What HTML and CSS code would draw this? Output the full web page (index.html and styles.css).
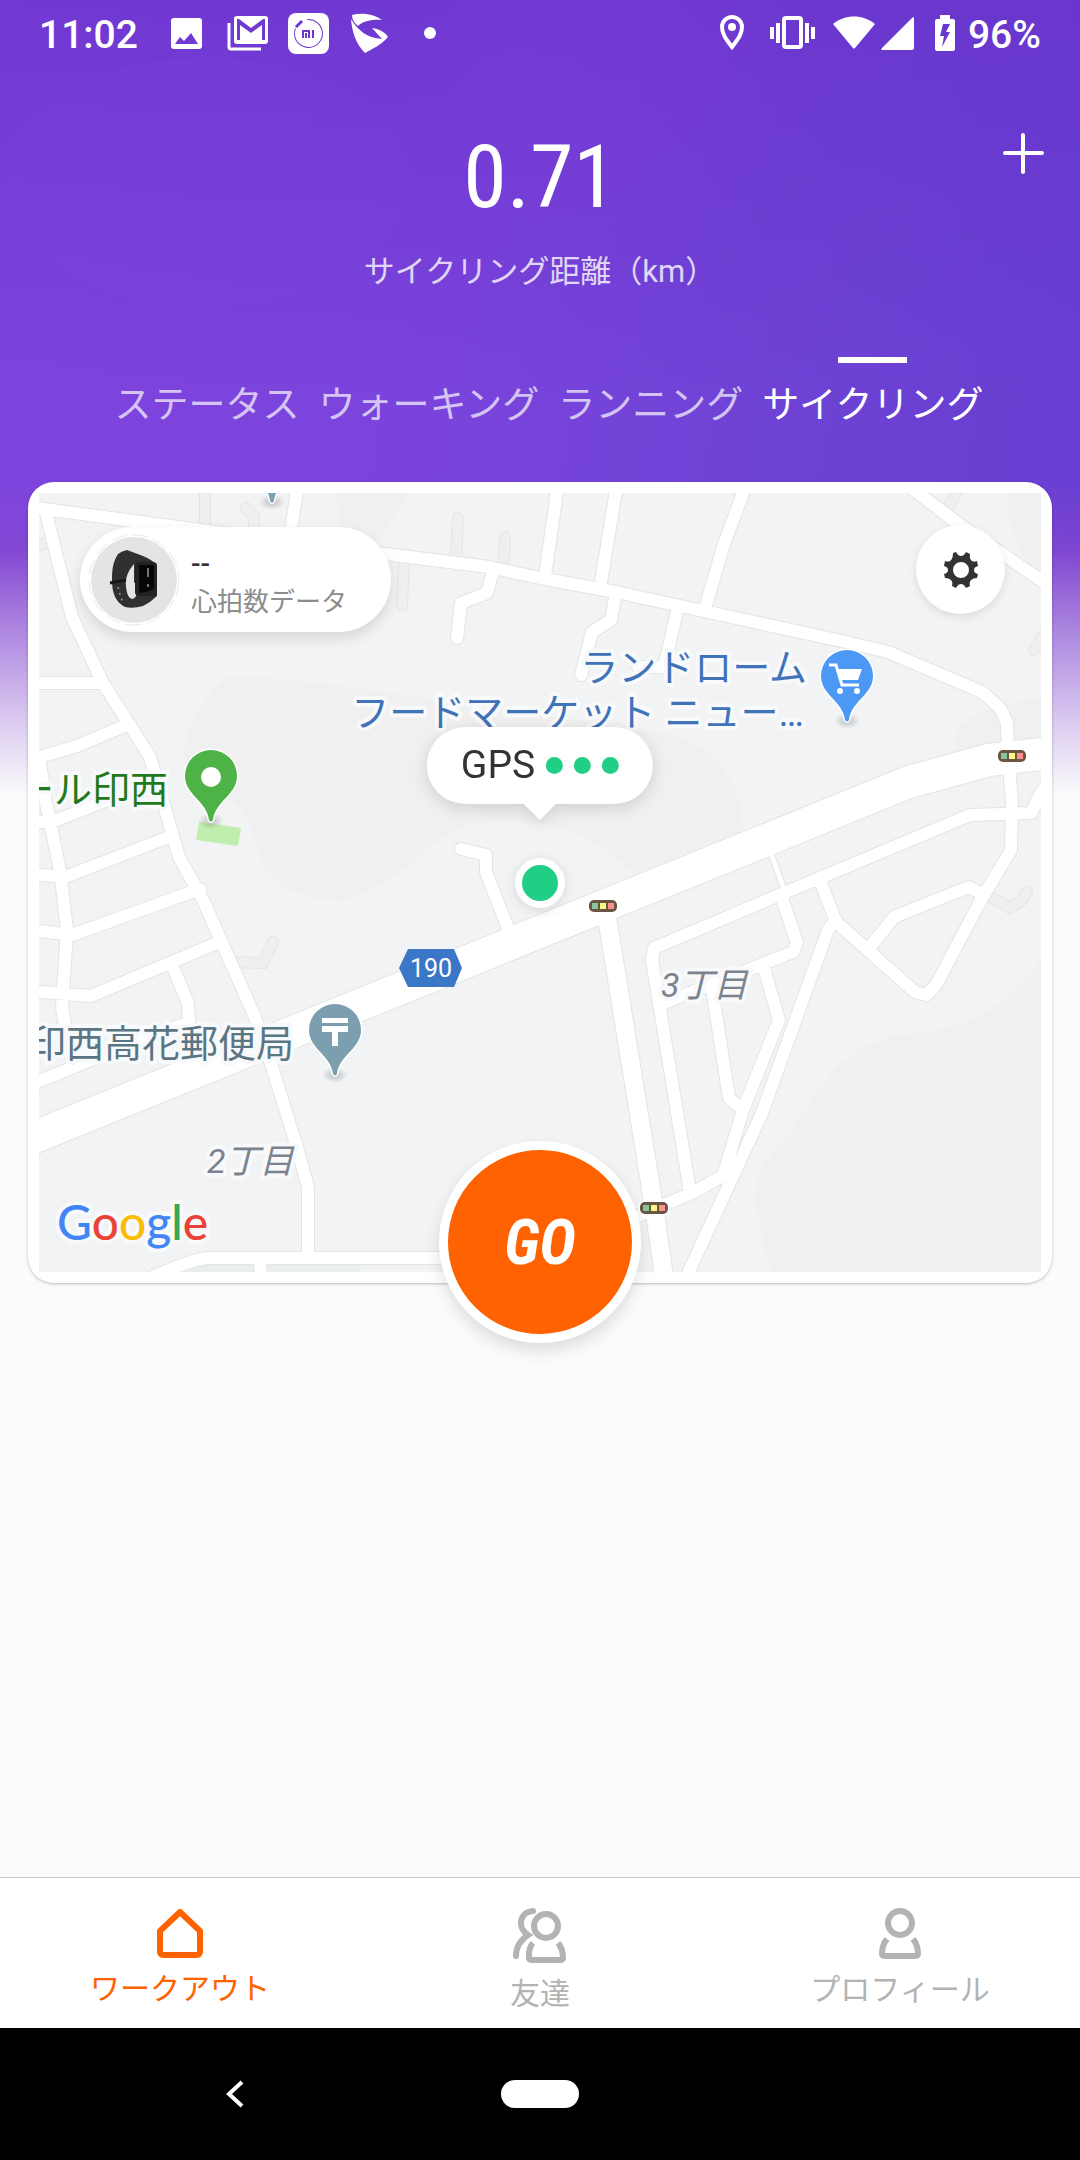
FILE: index.html
```html
<!DOCTYPE html>
<html lang="ja">
<head>
<meta charset="utf-8">
<meta name="viewport" content="width=device-width, initial-scale=1">
<title>ワークアウト</title>
<link rel="stylesheet" href="styles.css">
</head>
<body>
<div class="screen">
  <div class="status">
    <div class="status-side">
      <span class="status-text status-time">11:02</span>
      <svg class="status-icon" viewBox="0 0 41 41"><path fill="#fff" fill-rule="evenodd" d="M8 5H33a3 3 0 0 1 3 3V33a3 3 0 0 1-3 3H8a3 3 0 0 1-3-3V8a3 3 0 0 1 3-3ZM9 31H32L25 20L18 28L14 24Z"/></svg>
      <svg class="status-icon" viewBox="0 0 41 41"><path fill="#fff" fill-rule="evenodd" d="M10 3H38a3 3 0 0 1 3 3V28a3 3 0 0 1-3 3H10a3 3 0 0 1-3-3V6a3 3 0 0 1 3-3ZM10 6V27H13V12L24 20L35 12V27H38V6H36L24 15L12 6Z"/><path fill="none" stroke="#fff" stroke-width="3" d="M2 10V34a2 2 0 0 0 2 2H34"/></svg>
      <svg class="status-icon" viewBox="0 0 41 41"><rect width="41" height="41" rx="8" fill="#fff"/><circle cx="20.500" cy="20.500" r="14" fill="none" stroke="#6c39d0" stroke-dasharray="72 16" transform="rotate(-95 20.500 20.500)"/><path d="M8 14L14 8" stroke="#6c39d0" stroke-width="3"/><path fill="none" stroke="#6c39d0" stroke-width="2" d="M15 25V18H21V25M18 20V25M25 17V25"/></svg>
      <svg class="status-icon" viewBox="0 0 41 41"><path fill="#fff" d="M3 2C14-1 27 2 33 7C23 6 14 8 9 13C5 10 3 6 3 2Z"/><path fill="#fff" d="M2 6C9 18 19 25 33 26L23 15C31 16 37 20 39 24C32 32 25 35 16 40C7 31 3 19 2 6Z"/></svg>
      <svg class="status-icon" viewBox="0 0 41 41"><circle cx="20" cy="20" r="6" fill="#fff"/></svg>
    </div>
    <div class="status-side status-right">
      <svg width="34" height="41" viewBox="0 0 34 41"><path fill="none" stroke="#fff" stroke-width="4" d="M14 34C8 26 4 21 4 14a10 10 0 0 1 20 0C24 21 20 26 14 34Z"/><circle cx="14" cy="14" r="4" fill="#fff"/></svg>
      <svg width="45" height="41" viewBox="0 0 45 41"><rect x="14" y="5" width="17" height="29" rx="2" fill="none" stroke="#fff" stroke-width="4"/><path stroke="#fff" stroke-width="4" d="M2 14V26M8 10V30M37 10V30M43 14V26"/></svg>
      <svg width="84" height="41" viewBox="0 0 84 41"><path fill="#fff" d="M0 11C12 1 30 1 42 11L22 35Q21 36 20 35ZM81 5V35a2 2 0 0 1-2 2H50Q47 37 49 35L79 5Q81 3 81 5Z"/></svg>
      <span class="battery">
        <svg width="20" height="41" viewBox="0 0 20 41"><path fill="#fff" fill-rule="evenodd" d="M5 2H15V6H18a2 2 0 0 1 2 2V36a2 2 0 0 1-2 2H2a2 2 0 0 1-2-2V8a2 2 0 0 1 2-2H5ZM8 11L5 23H9L7 34L15 19H11L15 11Z"/></svg>
        <span class="status-text">96%</span>
      </span>
    </div>
  </div>

  <header class="summary">
    <div class="distance">0.71</div>
    <div class="caption">サイクリング距離（km）</div>
    <button class="add" type="button" aria-label="追加"><svg width="43" height="43" viewBox="0 0 43 43"><path d="M21 3V40M3 21H40" stroke="#fff" stroke-width="4" stroke-linecap="round"/></svg></button>
  </header>

  <nav class="tabs">
    <button type="button" class="tab">ステータス</button>
    <button type="button" class="tab">ウォーキング</button>
    <button type="button" class="tab">ランニング</button>
    <button type="button" class="tab tab-active">サイクリング</button>
  </nav>

  <main class="content">
    <section class="card">
      <div class="map">
        <svg class="map-art" viewBox="39 493 1002 779">
          <defs>
            <radialGradient id="pin-shade"><stop offset="0.300" stop-color="#000" stop-opacity=".16"/><stop offset="1" stop-color="#000" stop-opacity="0"/></radialGradient>
            <path id="pin" d="M-2 -2C-4 -21 -26 -27 -26 -46A26 26 0 0 1 26 -46C26 -27 4 -21 2 -2Q0 1 -2 -2Z"/>
            <g id="signal">
              <rect x="-16" y="-8" width="32" height="16" rx="7" fill="#fff" opacity=".8"/>
              <rect x="-14" y="-6" width="28" height="12" rx="5" fill="#6a5543"/>
              <rect x="-11" y="-3" width="6" height="6" fill="#87c799"/><rect x="-3" y="-3" width="6" height="6" fill="#fdf884"/><rect x="5" y="-3" width="6" height="6" fill="#fc9090"/>
            </g>
            <g id="alleys">
              <path d="M205 480V530M246 508L254 517V540M458 518L456 560M505 537L504 562M404 560L402 605M30 548L50 542M960 485L946 512M1045 633L1034 650M985 894L1010 908L1022 900L1027 892M230 962L263 963L273 942"/>
            </g>
            <g id="roads" fill="none" stroke-linejoin="round">
              <path d="M461 849L486 855V872L508 928M298 485L291 530M492 575L487 593L461 603L457 638M616 592L611 620L592 632L581 675M678 607L664 667H638M558 485L545 576M617 485L600 588M260 1258L261 1280"/>
              <path d="M30 507L200 530L393 555L489 567L540 578L616 592L685 607L846 642L888 652L982 692L1000 708L1007 723L1008 755L1012 803L1011 850L981 900L936 985L926 995L915 992L836 922L821 883M746 485L723 547L705 609M910 487L960 525L1045 583M45 509L72 617L103 683L150 757L172 833L179 857L203 900L255 1017L272 1067L297 1147L308 1187V1258M30 683H101M30 760L77 746L122 727M30 822H52L158 780M30 874L65 877L169 837M30 930L72 935L200 889M30 991L91 996L217 943M40 763L46 803L60 870L67 930L62 1007L70 1055M172 965L188 1003L189 1022L103 1055L30 1085M30 1040L64 1028M1050 780L1041 793L1031 813L970 815L822 877L654 948L652 960L690 1192M781 895L797 943L793 952L664 1003M764 968L779 1020L743 1110L724 1173M712 988L729 1098L743 1110M836 920L828 930L762 1113L685 1280M984 895L969 887L936 900L894 917L871 946M638 1216L692 1193L728 1173M150 1278Q195 1258 209 1258H460"/>
            </g>
            <g id="highways" fill="none" stroke-linejoin="round"><path d="M20 1143L909 782L989 760L1050 753"/></g>
          </defs>
          <rect x="39" y="493" width="1002" height="779" fill="#f1f3f4"/>
          <path fill="#f0f0f0" d="M227 677Q270 674 390 693L634 729Q742 738 743 833L640 878Q575 823 545 823Q480 815 448 833C415 860 390 887 344 900C262 898 262 860 253 833C245 800 222 800 190 770C170 745 208 690 227 677ZM1041 960C1000 1010 980 1028 895 1035C815 1060 825 1100 764 1163Q750 1190 760 1225L771 1272H1041ZM1007 493C1009 545 1025 560 1041 577V493ZM337 493H410L375 545L340 540ZM1041 697Q930 715 963 756L1041 750Z"/>
          <path fill="#eaefee" d="M180 1264H360V1272H160Z"/>
          <use href="#alleys" fill="none" stroke="#e4e5e6" stroke-width="12" stroke-linecap="round"/>
          <use href="#alleys" fill="none" stroke="#efefef" stroke-width="10" stroke-linecap="round"/>
          <g stroke="#e3e4e5" stroke-linecap="round">
            <use href="#roads" stroke-width="14"/>
            <use href="#highways" stroke-width="34"/>
            <path d="M605 905L654 1207L666 1290" fill="none" stroke-width="20"/>
            <path d="M770 850L783 887" stroke-width="7"/>
          </g>
          <g stroke="#fff" stroke-linecap="round">
            <use href="#roads" stroke-width="12"/>
            <use href="#highways" stroke-width="32"/>
            <path d="M605 905L654 1207L666 1290" fill="none" stroke-width="18"/>
            <path d="M770 850L783 887" stroke-width="5"/>
          </g>
          <path fill="#c1eeae" d="M199 822L241 828L238 846L196 840Z"/>
          <use href="#signal" x="603" y="906"/>
          <use href="#signal" x="654" y="1208"/>
          <use href="#signal" x="1012" y="756"/>

          <g fill="url(#pin-shade)"><ellipse cx="211" cy="821" rx="13" ry="8"/><ellipse cx="847" cy="721" rx="13" ry="8"/><ellipse cx="335" cy="1075" rx="13" ry="8"/><ellipse cx="272" cy="502" rx="13" ry="8"/></g>
          <g stroke="#fff" stroke-width="3" paint-order="stroke">
            <use href="#pin" x="211" y="822" fill="#4eb346"/>
            <use href="#pin" x="847" y="722" fill="#4c98f5"/>
            <use href="#pin" x="335" y="1076" fill="#7c9faf"/>
            <use href="#pin" x="272" y="503" fill="#7c9faf"/>
          </g>
          <circle cx="211" cy="777" r="10" fill="#fff"/>
          <path fill="none" stroke="#fff" stroke-width="3" d="M829 665H836L842 685H859"/>
          <path fill="#fff" d="M836 669H862L858 680H840Z"/><circle cx="840" cy="691" r="3" fill="#fff"/><circle cx="857" cy="691" r="3" fill="#fff"/>
          <path fill="#fff" d="M322 1018H348V1023H322ZM322 1026H348V1032H338V1046H332V1032H322Z"/>
          <path fill="#3a77c6" d="M408 949H454L462 968L454 987H408L399 968Z"/>

          <text class="route" x="431" y="977">190</text>
          <text class="place place-shop" x="807" y="681">ランドローム</text>
          <text class="place place-shop" x="804" y="726">フードマーケット ニュー…</text>
          <text class="place place-park" x="168" y="803">モール印西</text>
          <text class="place place-post" x="294" y="1057">印西高花郵便局</text>
          <text class="district" x="207" y="1173">2丁目</text>
          <text class="district" x="661" y="997">3丁目</text>
          <text class="brand" x="57" y="1240"><tspan fill="#4285f4">G</tspan><tspan fill="#ea4335">o</tspan><tspan fill="#fbbc05">o</tspan><tspan fill="#4285f4">g</tspan><tspan fill="#34a853">l</tspan><tspan fill="#ea4335">e</tspan></text>
        </svg>
        <span class="here"></span>
        <div class="gps"><span>GPS</span><i></i><i></i><i></i></div>
        <div class="heart">
          <svg width="90" height="92" viewBox="0 0 90 92">
            <circle cx="45" cy="46" r="45" fill="#fff" stroke="#e8e8e8" stroke-dasharray="16 5"/>
            <circle cx="45" cy="46" r="43" fill="#e4e4e4"/>
            <path fill="#303030" fill-rule="evenodd" d="M29 20Q33 17 38 16L54 22Q64 26 68 32V62Q62 68 54 72Q44 75 36 73C27 68 23 60 23 46C23 35 24 28 29 20ZM45 30C39 37 36 44 37 53C38 61 40 65 44 65C48 63 49 58 48 52L45 48Z"/>
            <rect x="46" y="28" width="22" height="34" rx="4" fill="#222"/>
            <path fill="#060606" d="M50 31H65V54Q62 58 50 59Z"/>
            <path d="M59 34V43M59 50V53" stroke="#737373" stroke-width="2"/>
            <path d="M29 53Q31 62 34 68" fill="none" stroke="#858585" stroke-width="2" stroke-dasharray="2 4"/>
            <path d="M21 49L37 46" stroke="#161616" stroke-width="3"/>
          </svg>
          <div class="heart-text"><span class="heart-value">--</span><span class="heart-label">心拍数データ</span></div>
        </div>
        <button class="settings" type="button" aria-label="設定"><svg width="36" height="36" viewBox="-18 -18 36 36"><path fill="#333" fill-rule="evenodd" d="M-8 -17L-5 -18Q-3 -14 0 -14Q3 -14 5 -18L9 -16Q8 -11 11 -9Q13 -8 16 -9L17 -4Q13 -3 13 0Q13 3 17 4L16 8Q12 8 10 10Q8 12 9 16L5 18Q3 14 0 14Q-3 14 -5 18L-9 16Q-8 12 -10 10Q-12 8 -16 8L-17 4Q-13 3 -13 0Q-13 -3 -17 -4L-16 -9Q-13 -8 -11 -9Q-8 -11 -8 -17ZM0 -8A8 8 0 1 0 0 8A8 8 0 1 0 0 -8Z"/></svg></button>
      </div>
      <button class="go" type="button">GO</button>
    </section>
  </main>

  <nav class="bottom-nav">
    <a href="#" class="nav-item nav-active"><svg width="52" height="50" viewBox="0 0 52 50"><path fill="none" stroke="#ff6200" stroke-width="6" stroke-linejoin="round" d="M6 23L26 4L46 23V44a3 3 0 0 1-3 3H9a3 3 0 0 1-3-3Z"/></svg>ワークアウト</a>
    <a href="#" class="nav-item"><svg width="54" height="55" viewBox="0 0 54 55"><g fill="none" stroke="#b3b3b3" stroke-width="6"><circle cx="33" cy="18" r="12"/><path d="M20 35C15 40 16 46 16 50a2 2 0 0 0 2 2H48a2 2 0 0 0 2-2C50 46 50 41 45 35"/><path stroke-linecap="round" d="M20 3C6 4 4 20 15 27C6 33 3 40 3 48"/></g></svg>友達</a>
    <a href="#" class="nav-item"><svg width="42" height="51" viewBox="0 0 42 51"><g fill="none" stroke="#b3b3b3" stroke-width="6"><circle cx="21" cy="15" r="12"/><path d="M8 31C3 37 3 43 3 46a2 2 0 0 0 2 2H37a2 2 0 0 0 2-2C39 43 39 37 34 31"/></g></svg>プロフィール</a>
  </nav>

  <div class="system-nav">
    <button type="button" class="back" aria-label="戻る"><svg width="18" height="28" viewBox="0 0 18 28"><path fill="none" stroke="#fff" stroke-width="4" d="M16 2L3 14L16 26"/></svg></button>
    <button type="button" class="home-pill" aria-label="ホーム"></button>
  </div>
</div>
</body>
</html>
```
FILE: styles.css
```css
* { box-sizing: border-box; }

body {
  margin: 0;
  background: #fbfbfb;
  color: #333;
  font-family: Roboto, "Noto Sans CJK JP", sans-serif;
}

button {
  margin: 0;
  padding: 0;
  border: 0;
  background: none;
  color: inherit;
  font: inherit;
}

svg { display: block; }

.screen {
  display: flex;
  flex-direction: column;
  min-height: 100vh;
  background:
    linear-gradient(180deg, rgba(251,251,251,0) 550px, rgba(251,251,251,.35) 630px, rgba(251,251,251,.7) 715px, #fbfbfb 795px),
    linear-gradient(180deg, rgba(134,72,208,0) 480px, rgba(134,72,208,.8) 560px),
    radial-gradient(205px 125px at 206px 182px, rgba(130,70,225,.12) 99%, transparent),
    radial-gradient(200px 200px at 602px 55px, rgba(130,60,220,.2) 40%, transparent),
    linear-gradient(180deg, rgba(104,48,202,.6), rgba(104,48,202,0) 400px),
    linear-gradient(100deg, #7e44de 0%, #7a44dc 35%, #6c42d4 62%, #643ad0 100%);
}

.status {
  display: flex;
  align-items: center;
  justify-content: space-between;
  height: 67px;
  padding: 0 39px;
  color: #fff;
}

.status-side {
  display: flex;
  align-items: center;
  gap: 20px;
}

.status-right { gap: 18px; }

.status-icon { width: 41px; height: 41px; }

.status-text {
  font-size: 39px;
  font-weight: 500;
  line-height: 48px;
  padding-top: 2px;
}

.status-time { min-width: 107px; }

.battery {
  display: flex;
  align-items: center;
  gap: 13px;
}

.summary {
  position: relative;
  padding-top: 50px;
  color: #fff;
  text-align: center;
}

.distance {
  font-family: "Roboto Condensed", "Liberation Sans Narrow", "Liberation Sans", sans-serif;
  font-size: 88px;
  font-weight: 400;
  line-height: 120px;
}

.caption {
  color: rgba(255,255,255,.8);
  font-size: 31px;
  line-height: 70px;
}

.add {
  position: absolute;
  top: 65px;
  right: 35px;
}

.tabs {
  display: flex;
  justify-content: center;
  gap: 19px;
  padding: 50px 0 51px 18px;
  color: rgba(255,255,255,.7);
}

.tab {
  display: flex;
  flex-direction: column;
  align-items: center;
  gap: 18px;
  font-size: 37px;
  line-height: 50px;
}

.tab::before {
  content: "";
  width: 69px;
  height: 6px;
}

.tab-active { color: #fff; }

.tab-active::before { background: #fff; }

.content {
  flex: 1;
  padding: 0 28px 90px;
}

.card {
  position: relative;
  padding: 11px;
  border-radius: 26px;
  background: #fff;
  box-shadow: 0 1px 3px rgba(0,0,0,.25);
}

.map {
  position: relative;
  overflow: hidden;
}

.map-art { width: 100%; height: auto; }

.place,
.district,
.brand {
  stroke: #f8f9fa;
  stroke-width: 8px;
  stroke-linejoin: round;
  paint-order: stroke;
}

.place {
  font-size: 38px;
  text-anchor: end;
}

.place-shop { fill: #4173b9; }
.place-park { fill: #1f7a1b; }
.place-post { fill: #5a7684; }

.district {
  fill: #7c838e;
  font-size: 34px;
  font-style: italic;
}

.route {
  fill: #fff;
  font-size: 25px;
  text-anchor: middle;
}

.brand {
  font-family: Lato, sans-serif;
  font-size: 48px;
  font-weight: 500;
}

.here {
  position: absolute;
  top: 50%;
  left: 50%;
  width: 50px;
  height: 50px;
  border: 7px solid #fff;
  border-radius: 50%;
  background: #21ce86;
  box-shadow: 0 2px 12px rgba(0,0,0,.12);
  transform: translate(-50%, -50%);
}

.gps {
  position: absolute;
  top: 30%;
  left: 50%;
  display: flex;
  align-items: center;
  gap: 11px;
  height: 77px;
  padding: 0 34px;
  border-radius: 39px;
  background: #fff;
  font-size: 39px;
  filter: drop-shadow(0 4px 8px rgba(0,0,0,.14));
  transform: translateX(-50%);
}

.gps i {
  width: 17px;
  height: 17px;
  border-radius: 50%;
  background: #21ce86;
}

.gps::after {
  content: "";
  position: absolute;
  top: 100%;
  left: 50%;
  border: 16px solid transparent;
  border-top-color: #fff;
  border-bottom: 0;
  transform: translateX(-50%);
}

.heart {
  position: absolute;
  top: 34px;
  left: 41px;
  display: flex;
  align-items: center;
  gap: 12px;
  height: 105px;
  padding: 0 44px 0 9px;
  border-radius: 53px;
  background: #fff;
  box-shadow: 0 6px 14px rgba(0,0,0,.12);
}

.heart-text {
  display: flex;
  flex-direction: column;
  padding-top: 6px;
}

.heart-value {
  font-size: 28px;
  font-weight: 500;
  line-height: 38px;
}

.heart-label {
  color: #8c8c8c;
  font-size: 26px;
  line-height: 38px;
}

.settings {
  position: absolute;
  top: 32px;
  right: 36px;
  display: grid;
  place-items: center;
  width: 89px;
  height: 89px;
  border-radius: 50%;
  background: #fff;
  box-shadow: 0 3px 8px rgba(0,0,0,.1);
}

.go {
  position: absolute;
  bottom: -60px;
  left: 50%;
  width: 202px;
  height: 202px;
  border: 9px solid #fff;
  border-radius: 50%;
  background: #ff6200;
  box-shadow: 0 8px 16px rgba(0,0,0,.12);
  color: #fff;
  font-family: "Roboto Condensed", "Liberation Sans Narrow", "Liberation Sans", sans-serif;
  font-size: 62px;
  font-style: italic;
  font-weight: 700;
  transform: translateX(-50%);
}

.bottom-nav {
  display: grid;
  grid-template-columns: repeat(3, 1fr);
  height: 151px;
  padding-top: 30px;
  border-top: 1px solid #c8c8c8;
  background: #fff;
}

.nav-item {
  display: flex;
  flex-direction: column;
  align-items: center;
  gap: 9px;
  color: #b3b3b3;
  font-size: 30px;
  line-height: 44px;
  text-decoration: none;
}

.nav-active { color: #ff6200; }

.system-nav {
  display: grid;
  grid-template-columns: 1fr 78px 1fr;
  align-items: center;
  justify-items: center;
  height: 132px;
  background: #000;
}

.back { padding-right: 32px; }

.home-pill {
  width: 78px;
  height: 28px;
  border-radius: 14px;
  background: #fff;
}
```
